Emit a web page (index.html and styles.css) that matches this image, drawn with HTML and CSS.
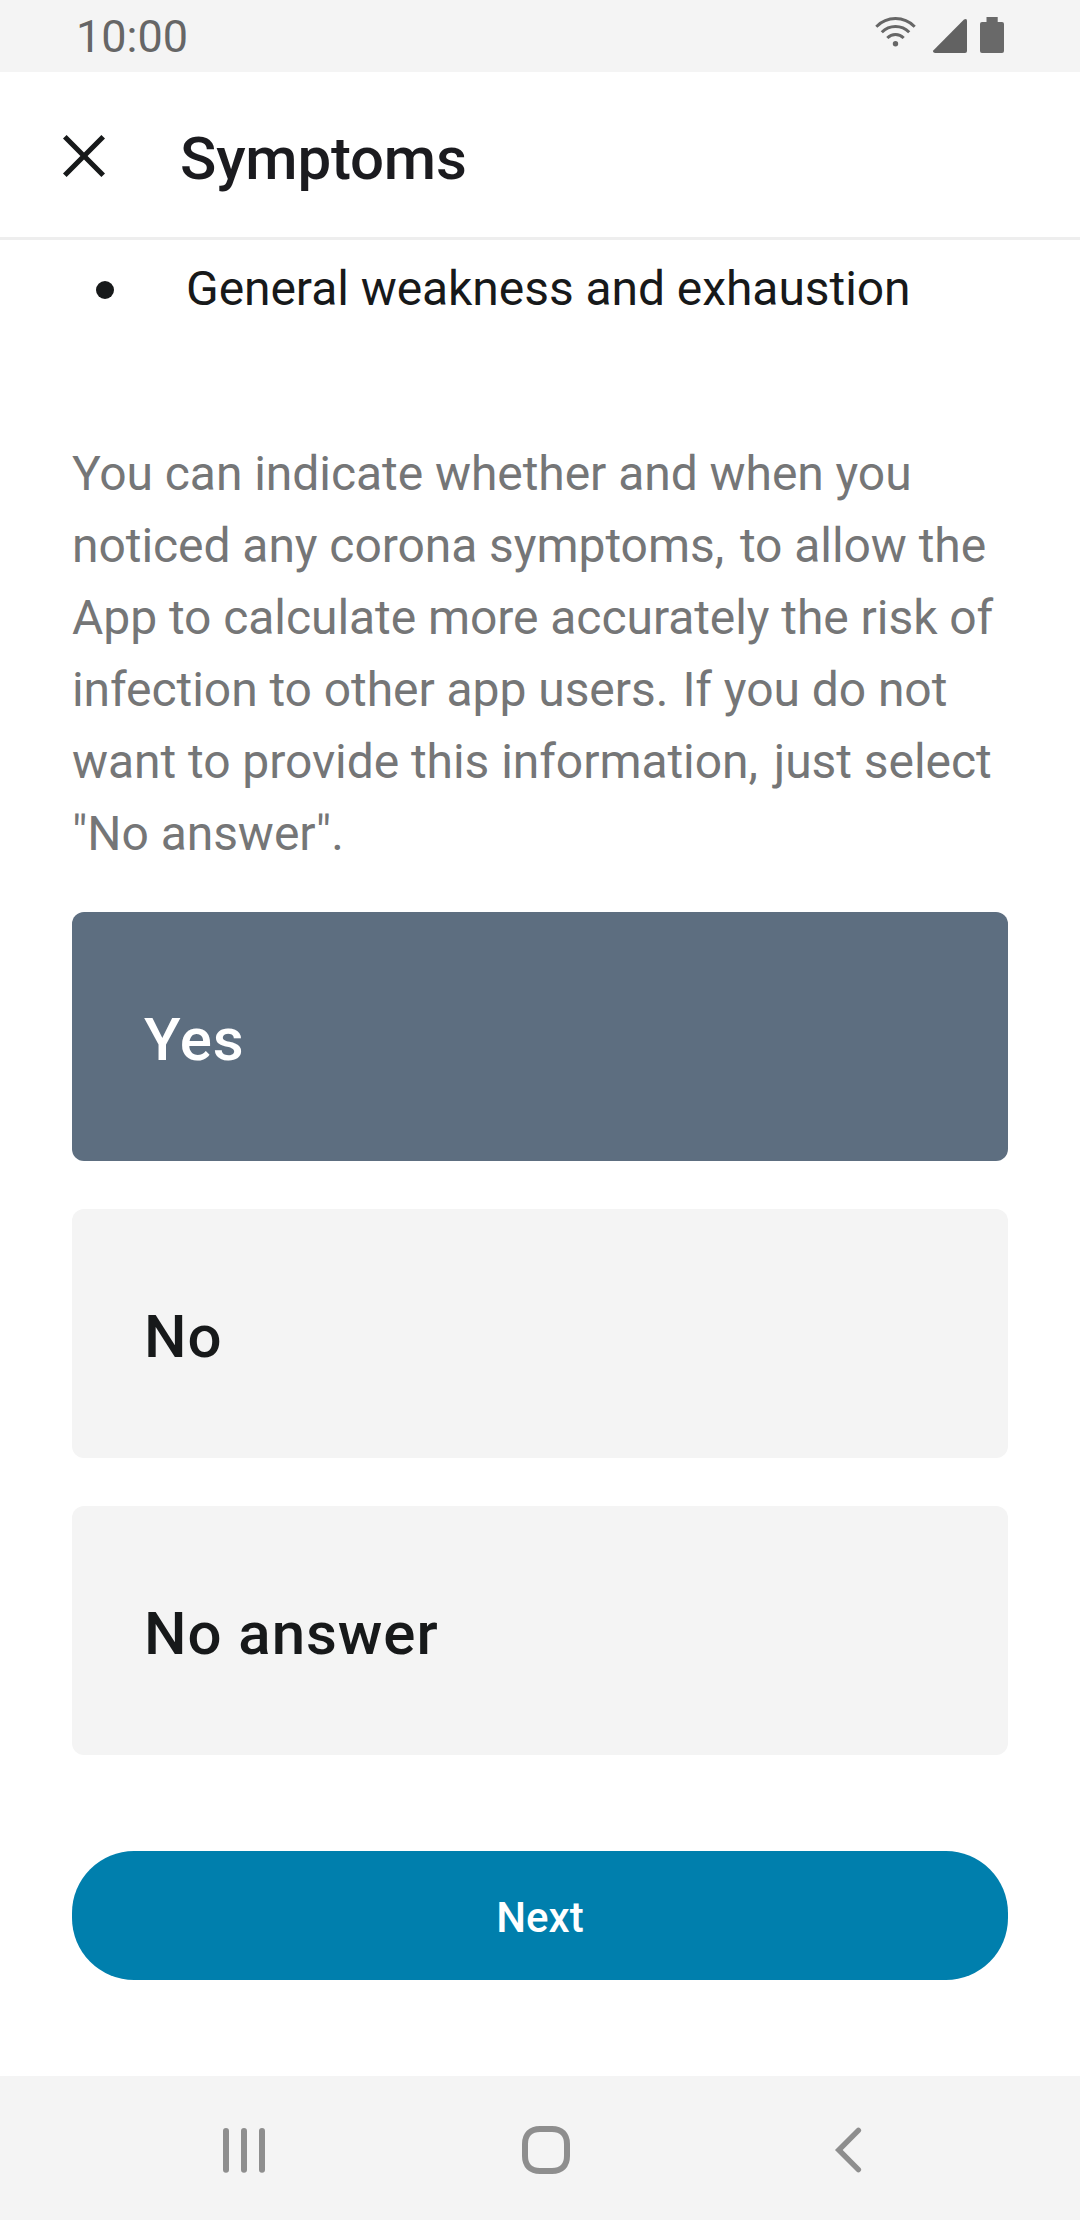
FILE: index.html
```html
<!DOCTYPE html>
<html lang="en">
<head>
<meta charset="utf-8">
<title>Symptoms</title>
<link rel="stylesheet" href="styles.css">
</head>
<body>
<header class="status">
  <span class="time">10:00</span>
  <svg class="status-icons" width="132" height="42" viewBox="874 14 132 42">
    <g fill="none" stroke="#666" stroke-width="3">
      <path d="M876.3 26.7Q884.5 18.6 895.5 18.6T914.7 26.7"/>
      <path d="M881.8 32.2Q887.5 26.4 895.5 26.4T909.2 32.2"/>
      <path d="M887.3 38Q890.8 34.4 895.5 34.4T903.7 38"/>
    </g>
    <circle cx="895.5" cy="43.8" r="2.7" fill="#666"/>
    <path d="M964 19.6Q967 17.8 967 21V51Q967 53 965 53H935Q932 52.5 933.5 50.3Z" fill="#626262"/>
    <path d="M986.5 17H997.7V22H1002Q1004 22 1004 24V51Q1004 53 1002 53H982Q980 53 980 51V24Q980 22 982 22H986.5Z" fill="#696969"/>
  </svg>
</header>
<div class="toolbar">
  <svg class="close" width="72" height="72" viewBox="0 0 24 24"><path fill="#17191a" d="M19 6.2 17.8 5 12 10.8 6.2 5 5 6.2 10.8 12 5 17.8 6.2 19 12 13.2 17.8 19 19 17.8 13.2 12z"/></svg>
  <h1 class="title">Symptoms</h1>
</div>
<main class="content">
  <div class="symptom"><i class="bullet"></i><span>General weakness and exhaustion</span></div>
  <p class="info">You can indicate whether and when you<br>noticed any corona symptoms<span class="comma">,</span> to allow the<br>App to calculate more accurately the risk of<br>infection to other app users<span class="stop">.</span> If you do not<br>want to provide this information<span class="comma">,</span> just select<br>"No answer".</p>
  <div class="options">
    <div class="option selected">Yes</div>
    <div class="option">No</div>
    <div class="option">No answer</div>
  </div>
  <div class="next">Next</div>
</main>
<nav class="navbar">
  <svg width="48" height="48" viewBox="220 2126 48 48"><path d="M226 2131V2169.8M244 2131V2169.8M262 2131V2169.8" stroke="#8e8e8e" stroke-width="6" stroke-linecap="round"/></svg>
  <svg width="48" height="48" viewBox="0 0 48 48"><path d="M18 3H30C39.500 3 45 8.500 45 18V30C45 39.500 39.500 45 30 45H18C8.500 45 3 39.500 3 30V18C3 8.500 8.500 3 18 3Z" fill="none" stroke="#8e8e8e" stroke-width="6"/></svg>
  <svg width="48" height="48" viewBox="824 2126 48 48"><path d="M858.4 2130.4 838.8 2150 858.4 2169.600" fill="none" stroke="#8e8e8e" stroke-width="5.400" stroke-linecap="round"/></svg>
</nav>
</body>
</html>
```
FILE: styles.css
```css
* { box-sizing: border-box; }
body {
  margin: 0;
  width: 1080px;
  height: 2220px;
  display: flex;
  flex-direction: column;
  background: #fff;
  color: #17191a;
  font-family: Roboto, sans-serif;
  overflow: hidden;
}
svg { display: block; flex: none; }
.status {
  height: 72px;
  background: #f4f4f4;
  display: flex;
  justify-content: space-between;
  padding: 0 74px 0 76px;
}
.time { font-size: 45px; line-height: 74px; color: #666; }
.status-icons { margin-top: 14px; }
.toolbar {
  height: 168px;
  display: flex;
  align-items: center;
  gap: 60px;
  padding: 3px 0 0 48px;
  border-bottom: 3px solid #eee;
}
.title {
  margin: 0;
  padding-top: 6px;
  font-size: 60px;
  font-weight: 500;
  line-height: 72px;
  letter-spacing: -0.2px;
  color: #1b1b1f;
}
.content {
  flex: 1;
  padding: 13px 72px 0;
  font-size: 48px;
  line-height: 72px;
  letter-spacing: -0.06px;
}
.symptom {
  display: flex;
  align-items: center;
  padding-left: 24px;
  gap: 72px;
}
.bullet { width: 18px; height: 18px; margin-top: 2px; border-radius: 50%; background: #17191a; }
.info { margin: 113px 0 42px; color: #757677; white-space: nowrap; }
.comma { letter-spacing: 4px; }
.stop { letter-spacing: 2.2px; }
.options { display: flex; flex-direction: column; gap: 48px; }
.option {
  height: 249px;
  padding: 7px 0 0 72px;
  display: flex;
  align-items: center;
  border-radius: 12px;
  background: #f4f4f4;
  font-size: 60px;
  font-weight: 500;
  letter-spacing: 0.95px;
}
.selected { background: #5d6e80; color: #fff; }
.next {
  height: 129px;
  margin-top: 96px;
  border-radius: 62px;
  background: #007fad;
  color: #fff;
  font-size: 42px;
  font-weight: 500;
  line-height: 134px;
  letter-spacing: 0;
  text-align: center;
}
.navbar {
  height: 144px;
  background: #f4f4f4;
  display: flex;
  align-items: center;
  justify-content: space-between;
  padding: 4px 208px 0 220px;
}
```
